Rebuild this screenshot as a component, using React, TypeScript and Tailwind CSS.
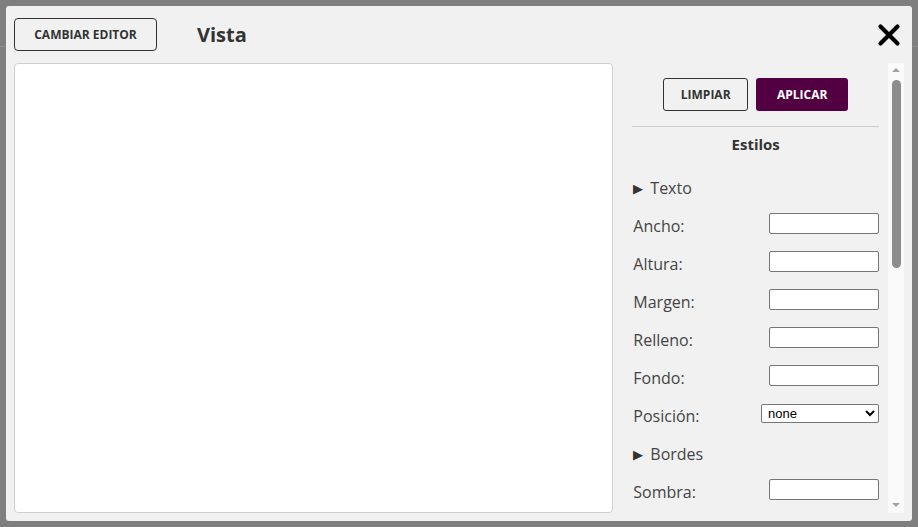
const font = { fontFamily: '"Open Sans", "Liberation Sans", sans-serif' };

function Field({ label, children }: { label: string; children: React.ReactNode }) {
  return (
    <div className="flex h-[38px] items-center justify-between pl-[1px]">
      <span className="-translate-y-px text-[16px] text-[#444]">{label}</span>
      {children}
    </div>
  );
}

function TextInput() {
  return (
    <input
      type="text"
      className="h-[21px] w-[110px] -translate-y-[3px] rounded-[2px] border border-[#767676] bg-white outline-none"
    />
  );
}

function Toggle({ label }: { label: string }) {
  return (
    <div className="flex h-[38px] items-center gap-[7px] pl-[1px] text-[16px] text-[#444]">
      <span className="text-[13px] text-[#333]">▶</span>
      <span className="-translate-y-px">{label}</span>
    </div>
  );
}

export default function App() {
  return (
    <div className="relative h-[527px] w-[918px] overflow-hidden bg-[#7f7f7f]" style={font}>
      <div className="h-[47px] border-b border-[#8e8e8e]" />

      <div className="absolute left-[6px] top-[6px] flex h-[515px] w-[906px] flex-col rounded-[3px] bg-[#f1f1f1] px-[8px] pb-[8px]">
        <div className="flex h-[57px] items-center">
          <button className="h-[33px] w-[143px] rounded-[4px] border border-[#333] text-[12px] font-bold text-[#333]">
            CAMBIAR EDITOR
          </button>
          <h2 className="ml-[40px] text-[20px] font-bold text-[#333]">Vista</h2>
          <svg className="ml-auto mr-[3px]" width="24" height="24" viewBox="0 0 24 24">
            <path d="M3.5 3.5 L20.5 20.5 M20.5 3.5 L3.5 20.5" stroke="#000" strokeWidth="4.2" strokeLinecap="round" />
          </svg>
        </div>

        <div className="flex min-h-0 flex-1">
          <div className="h-[450px] w-[600px] rounded-[4px] border border-[#cfcfcf] bg-white" />

          <div className="ml-[19px] flex min-h-0 w-[247px] flex-col overflow-hidden">
            <div className="flex justify-center gap-[8px] pt-[15px]">
              <button className="h-[33px] w-[85px] rounded-[3px] border border-[#333] text-[12px] font-bold text-[#333]">
                LIMPIAR
              </button>
              <button className="h-[33px] w-[92px] rounded-[3px] bg-[#520042] text-[12px] font-bold text-white">
                APLICAR
              </button>
            </div>
            <div className="mt-[15px] border-t border-[#cccccc]" />
            <div className="pt-[6px] text-center text-[15px] font-bold text-[#333]">Estilos</div>
            <div className="mt-[14px] flex flex-col">
              <Toggle label="Texto" />
              <Field label="Ancho:"><TextInput /></Field>
              <Field label="Altura:"><TextInput /></Field>
              <Field label="Margen:"><TextInput /></Field>
              <Field label="Relleno:"><TextInput /></Field>
              <Field label="Fondo:"><TextInput /></Field>
              <Field label="Posición:">
                <select
                  className="h-[19px] w-[118px] -translate-y-[3px] rounded-[2px] border border-[#767676] bg-white pl-[2px] text-[13px] text-black outline-none"
                  style={{ fontFamily: '"Liberation Sans", Arial, sans-serif' }}
                  defaultValue="none"
                >
                  <option value="none">none</option>
                </select>
              </Field>
              <Toggle label="Bordes" />
              <Field label="Sombra:"><TextInput /></Field>
            </div>
          </div>

          <div className="ml-[9px] flex w-[16px] flex-col items-center bg-[#fafafa]">
            <div className="mt-[5px] h-0 w-0 border-x-[4px] border-b-[4px] border-x-transparent border-b-[#a3a3a3]" />
            <div className="mt-[8px] h-[188px] w-[9px] rounded-[5px] bg-[#8c8c8c]" />
            <div className="mt-auto mb-[6px] h-0 w-0 border-x-[4px] border-t-[4px] border-x-transparent border-t-[#a3a3a3]" />
          </div>
        </div>
      </div>
    </div>
  );
}
